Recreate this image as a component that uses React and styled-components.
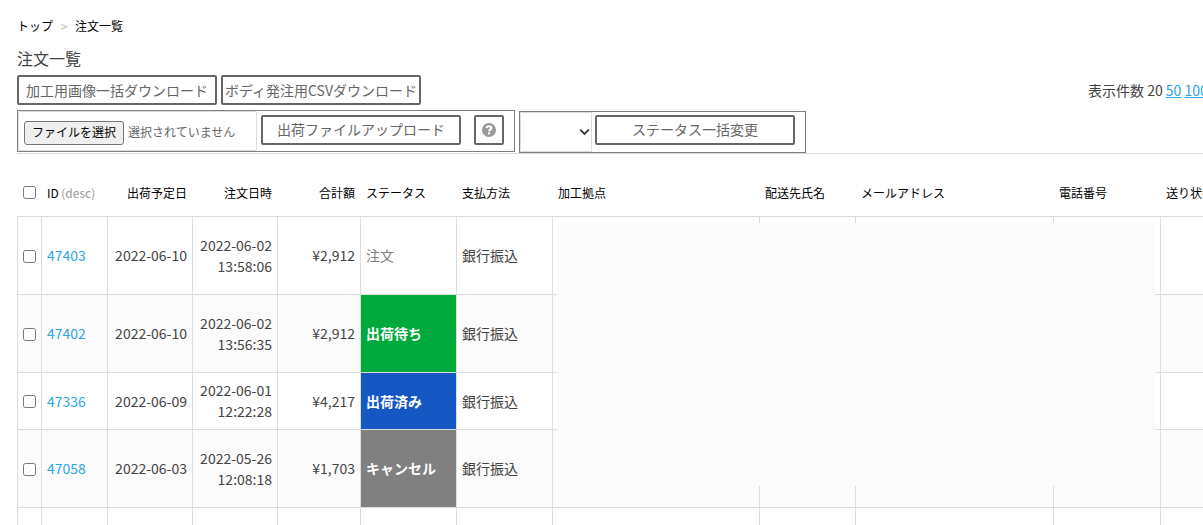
import React from "react";
import styled, { createGlobalStyle } from "styled-components";

const Global = createGlobalStyle`
  * { box-sizing: border-box; }
  html, body { margin: 0; background: #fff; overflow: hidden; }
  body {
    font-family: "Noto Sans CJK JP", "Noto Sans", sans-serif;
    font-size: 14px;
    line-height: 21px;
    color: #444;
  }
`;

const Page = styled.main`
  position: relative;
  height: 525px;
  padding: 15px 0 0 17px;
  overflow: hidden;
  white-space: nowrap;
`;

const Breadcrumb = styled.nav`
  display: flex;
  height: 21px;
  align-items: center;
  font-size: 12px;
  color: #000;
`;

const Separator = styled.span`
  width: 22px;
  text-align: center;
  color: #bbb;
`;

const Title = styled.h1`
  margin: 10px 0 0;
  height: 29px;
  font-size: 16px;
  line-height: 25px;
  font-weight: 400;
`;

const Toolbar = styled.div`
  display: flex;
  gap: 4px;
  height: 35px;
`;

const Button = styled.button`
  display: flex;
  flex: none;
  align-items: center;
  justify-content: center;
  width: ${(p) => (p.$square ? 30 : 200)}px;
  height: 30px;
  padding: 0 0 ${(p) => (p.$raised ? 1 : 0)}px;
  border: 2px solid #666;
  border-radius: 2px;
  background: #fff;
  color: #666;
  font: inherit;
  white-space: nowrap;
`;

const PageSize = styled.div`
  margin-left: 663px;
  padding-top: 5px;
`;

const SizeLink = styled.a`
  color: #2ba6e1;
  text-decoration: underline;
`;

const Actions = styled.div`
  display: flex;
  gap: 4px;
  width: 1300px;
  height: 44px;
  border-bottom: 1px solid #ddd;
`;

const Group = styled.div`
  display: flex;
  width: ${(p) => p.$width}px;
  height: 42px;
  margin-top: ${(p) => p.$top || 0}px;
  border: 1px solid #808080;

  ${Button} {
    margin-top: ${(p) => 4 - (p.$top || 0)}px;
  }
`;

const FileField = styled.div`
  display: flex;
  align-items: center;
  gap: 4px;
  width: 239px;
  height: 40px;
  margin-right: 4px;
  padding: 3px 0 0 5px;
  border: 1px solid #ddd;
  border-radius: 2px;
  font-size: 12px;
  color: #666;
`;

const FileButton = styled.button`
  width: 100px;
  height: 24px;
  padding: 0 0 1px;
  border: 1px solid #767676;
  border-radius: 3px;
  background: #efefef;
  color: #000;
  font: inherit;
  font-size: 12px;
  line-height: 20px;
`;

const FileStatus = styled.span`
  padding-bottom: 2px;
`;

const HelpSlot = styled.div`
  margin-left: 13px;
`;

const StatusSelect = styled.div`
  display: flex;
  align-items: center;
  justify-content: flex-end;
  width: 72px;
  height: 40px;
  margin-right: 3px;
  padding-right: 1px;
  border: 1px solid #ddd;
`;

const columns = "24px 66px 85px 85px 83px 96px 96px 207px 96px 198px 107px 140px";

const Row = styled.div`
  display: grid;
  grid-template-columns: ${columns};
  width: 1283px;
  height: ${(p) => p.$height}px;
  border-bottom: 1px solid #ddd;
  background: ${(p) => (p.$shaded ? "#fbfbfb" : "#fff")};
`;

const HeaderRow = styled(Row)`
  height: 63px;
  padding: 15px 0 1px;
  font-size: 12px;
  color: #000;
`;

const HeaderCell = styled.div`
  display: flex;
  align-items: center;
  gap: 2.5px;
  justify-content: ${(p) => (p.$right ? "flex-end" : "flex-start")};
  padding: 0 5px 0 6px;
`;

const Cell = styled(HeaderCell)`
  border-left: 1px solid #ddd;
  padding: 0 5px;
  text-align: ${(p) => (p.$right ? "right" : "left")};
`;

const StatusCell = styled(Cell)`
  background: ${(p) => p.$color || "transparent"};
  color: ${(p) => (p.$color ? "#fff" : "#808080")};
  font-weight: ${(p) => (p.$color ? 700 : 400)};
`;

const Check = styled.input.attrs({ type: "checkbox" })`
  width: 13px;
  height: 13px;
  margin: 1px 0 0;
`;

const IdLink = styled.a`
  color: #2ba6e1;
`;

const SortHint = styled.span`
  color: #999;
`;

const RedactedArea = styled.div`
  position: absolute;
  left: 557px;
  top: 223px;
  width: 598px;
  height: 263px;
  background: #fbfbfb;
`;

const headers = [
  ["出荷予定日", true],
  ["注文日時", true],
  ["合計額", true],
  ["ステータス"],
  ["支払方法"],
  ["加工拠点"],
  ["配送先氏名"],
  ["メールアドレス"],
  ["電話番号"],
  ["送り状番号"],
];

const orders = [
  { id: "47403", ship: "2022-06-10", date: "2022-06-02", time: "13:58:06", total: "¥2,912", status: "注文", height: 78 },
  { id: "47402", ship: "2022-06-10", date: "2022-06-02", time: "13:56:35", total: "¥2,912", status: "出荷待ち", color: "#00aa3c", height: 78 },
  { id: "47336", ship: "2022-06-09", date: "2022-06-01", time: "12:22:28", total: "¥4,217", status: "出荷済み", color: "#1558c3", height: 57 },
  { id: "47058", ship: "2022-06-03", date: "2022-05-26", time: "12:08:18", total: "¥1,703", status: "キャンセル", color: "#808080", height: 78 },
];

function HelpIcon() {
  return (
    <svg width="14" height="14" viewBox="0 0 14 14">
      <circle cx="7" cy="7" r="7" fill="#999" />
      <path d="M4.5 5.2C4.7 3.8 5.7 3.2 7 3.2c1.4 0 2.3.8 2.3 1.9 0 1.6-2.2 1.6-2.2 3.2" fill="none" stroke="#fff" strokeWidth="2.1" />
      <rect x="6" y="9.3" width="2.1" height="2" fill="#fff" />
    </svg>
  );
}

function Chevron() {
  return (
    <svg width="11" height="8" viewBox="0 0 11 8">
      <path d="M1.2 1.6 5.5 5.9 9.8 1.6" fill="none" stroke="#333" strokeWidth="1.8" />
    </svg>
  );
}

export default function App() {
  return (
    <Page>
      <Global />
      <Breadcrumb>
        <span>トップ</span>
        <Separator>&gt;</Separator>
        <span>注文一覧</span>
      </Breadcrumb>
      <Title>注文一覧</Title>
      <Toolbar>
        <Button>加工用画像一括ダウンロード</Button>
        <Button>ボディ発注用CSVダウンロード</Button>
        <PageSize>
          表示件数 20 <SizeLink>50</SizeLink> <SizeLink>100</SizeLink>
        </PageSize>
      </Toolbar>
      <Actions>
        <Group $width={498}>
          <FileField>
            <FileButton>ファイルを選択</FileButton>
            <FileStatus>選択されていません</FileStatus>
          </FileField>
          <Button $raised>出荷ファイルアップロード</Button>
          <HelpSlot>
            <Button $square aria-label="help"><HelpIcon /></Button>
          </HelpSlot>
        </Group>
        <Group $width={287} $top={1}>
          <StatusSelect><Chevron /></StatusSelect>
          <Button $raised>ステータス一括変更</Button>
        </Group>
      </Actions>
      <HeaderRow>
        <HeaderCell><Check /></HeaderCell>
        <HeaderCell>ID <SortHint>(desc)</SortHint></HeaderCell>
        {headers.map(([label, right]) => (
          <HeaderCell key={label} $right={right}>{label}</HeaderCell>
        ))}
      </HeaderRow>
      {orders.map((o, i) => (
        <Row key={o.id} $height={o.height} $shaded={i % 2 === 1}>
          <Cell><Check /></Cell>
          <Cell><IdLink>{o.id}</IdLink></Cell>
          <Cell $right>{o.ship}</Cell>
          <Cell $right>{o.date}<br />{o.time}</Cell>
          <Cell $right>{o.total}</Cell>
          <StatusCell $color={o.color}>{o.status}</StatusCell>
          <Cell>銀行振込</Cell>
          <Cell />
          <Cell />
          <Cell />
          <Cell />
          <Cell />
        </Row>
      ))}
      <Row $height={78}>
        {Array.from({ length: 12 }, (_, i) => <Cell key={i} />)}
      </Row>
      <RedactedArea />
    </Page>
  );
}
